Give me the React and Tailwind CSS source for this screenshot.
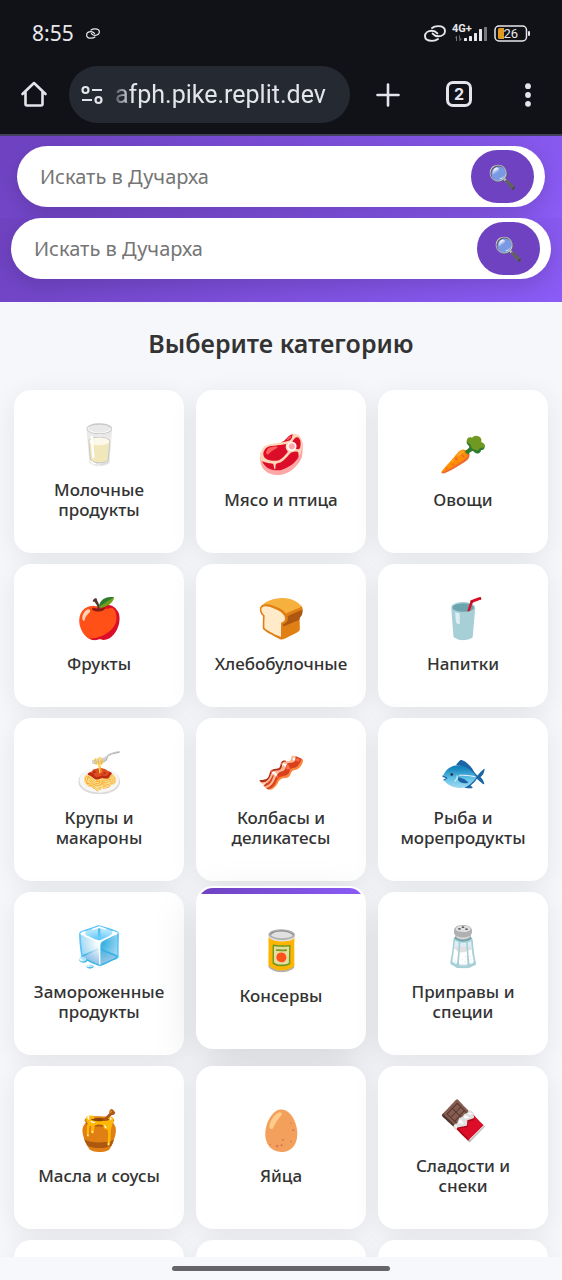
import React from "react";

const categories = [
  ["🥛", "Молочные продукты"],
  ["🥩", "Мясо и птица"],
  ["🥕", "Овощи"],
  ["🍎", "Фрукты"],
  ["🍞", "Хлебобулочные"],
  ["🥤", "Напитки"],
  ["🍝", "Крупы и макароны"],
  ["🥓", "Колбасы и деликатесы"],
  ["🐟", "Рыба и морепродукты"],
  ["🧊", "Замороженные продукты"],
  ["🥫", "Консервы"],
  ["🧂", "Приправы и специи"],
  ["🍯", "Масла и соусы"],
  ["🥚", "Яйца"],
  ["🍫", "Сладости и снеки"],
  ["", ""],
  ["", ""],
  ["", ""],
];

function ChainIcon({ className }) {
  return (
    <svg className={className} viewBox="0 0 22 17" fill="none" stroke="currentColor" strokeWidth="1.900" strokeLinecap="round">
      <path d="M8 3C9.500 1.700 11.500 1.100 14 1.100C18.300 1.100 21 3 21 5.900C21 9.200 18 11.300 14.200 11.300C11.500 11.300 10 10.200 8.600 8.600" />
      <path d="M14 14C12.500 15.300 10.500 15.900 8 15.900C3.700 15.900 1 14 1 11.100C1 7.800 4 5.700 7.800 5.700C10.500 5.700 12 6.800 13.400 8.400" />
    </svg>
  );
}

function StatusBar() {
  return (
    <div className="flex h-[66px] items-center justify-between px-8 text-[#e8e8ec]">
      <div className="flex items-center gap-3">
        <span className="text-[21px] leading-6">8:55</span>
        <ChainIcon className="h-[11px] w-[14px]" />
      </div>
      <div className="flex items-center gap-[6px]">
        <ChainIcon className="h-[17px] w-[22px]" />
        <svg className="h-[22px] w-[36px] overflow-visible" viewBox="0 -2 36 22" role="img" aria-label="4G+">
          <text x="0" y="8" fill="currentColor" fontSize="11" fontWeight="700" fontFamily="Roboto, sans-serif">4G+</text>
          <g fill="#77777d">
            <path d="M3 14L5 11.500V17H4V14ZM7 11.500H8V14.500H10L7.500 17.500Z" />
            <rect x="32" y="3" width="3" height="14" rx="0.500" />
          </g>
          <g fill="currentColor">
            <rect x="12" y="14" width="3" height="3" rx="0.500" />
            <rect x="17" y="12" width="3" height="5" rx="0.500" />
            <rect x="22" y="9" width="3" height="8" rx="0.500" />
            <rect x="27" y="5" width="3" height="12" rx="0.500" />
          </g>
        </svg>
        <svg className="h-[17px] w-[36px]" viewBox="0 0 36 17" role="img" aria-label="26">
          <rect x="1" y="1" width="31.500" height="15" rx="4" fill="none" stroke="currentColor" strokeWidth="1.500" />
          <path d="M5.500 3H10V14H5.500Q4 14 4 12.500V4.500Q4 3 5.500 3Z" fill="#e09a20" />
          <rect x="34" y="6" width="2" height="5" rx="1" fill="currentColor" />
          <text x="9.500" y="13" fill="currentColor" fontSize="13" fontFamily="Roboto, sans-serif">26</text>
        </svg>
      </div>
    </div>
  );
}

function Toolbar() {
  return (
    <div className="flex h-[68px] items-start justify-between pl-5 pr-[22px] text-[#e4e4ec]">
      <button aria-label="Home" className="mt-[14px]">
        <svg className="h-7 w-7" viewBox="0 0 28 28" fill="none" stroke="currentColor" strokeWidth="2.600" strokeLinejoin="round" strokeLinecap="round">
          <path d="M2.500 14L14 3L25.500 14M5.500 12V24Q5.500 25.500 7 25.500H21Q22.500 25.500 22.500 24V12" />
        </svg>
      </button>
      <div className="mr-[26px] ml-[21px] flex h-[57px] min-w-0 flex-1 items-center gap-3 rounded-full bg-[#252932] px-3">
        <svg className="h-5 w-[22px] shrink-0" viewBox="0 0 22 20" fill="none" stroke="currentColor" strokeWidth="2.200">
          <circle cx="4.500" cy="5" r="3" />
          <path d="M11 5H21M1 15H11" />
          <circle cx="17.500" cy="15" r="3" />
        </svg>
        <input
          aria-label="Address"
          defaultValue="afph.pike.replit.dev"
          className="min-w-0 flex-1 bg-transparent font-[Roboto,sans-serif] text-[25px] leading-8 outline-none [mask-image:linear-gradient(to_right,#0004,#000_16px)]"
        />
      </div>
      <div className="flex items-center">
        <button aria-label="New tab" className="mt-4">
          <svg className="h-6 w-6" viewBox="0 0 24 24" fill="none" stroke="currentColor" strokeWidth="2.600" strokeLinecap="round">
            <path d="M12 1.500V22.500M1.500 12H22.500" />
          </svg>
        </button>
        <button aria-label="Tabs" className="ml-[46px] mt-[15px] flex h-[26px] w-[26px] items-center justify-center rounded-[7px] border-[3px] border-current font-[Inter,sans-serif] text-[16px] leading-4 font-bold">2</button>
        <button aria-label="Menu" className="ml-[44px] mt-4">
          <svg className="h-6 w-6" viewBox="0 0 24 24" fill="currentColor">
            <circle cx="12" cy="3.200" r="2.900" />
            <circle cx="12" cy="12" r="2.900" />
            <circle cx="12" cy="20.800" r="2.900" />
          </svg>
        </button>
      </div>
    </div>
  );
}

function SearchBox() {
  return (
    <form className="flex h-[61px] items-center rounded-full bg-white pr-[11px] pl-[23px] shadow-[0_6px_22px_rgba(0,0,0,0.15)]">
      <input
        type="text"
        aria-label="Поиск"
        placeholder="Искать в Дучарха"
        className="min-w-0 flex-1 bg-transparent text-[20px] leading-7 outline-none placeholder:text-[#757575]"
      />
      <button type="button" aria-label="Найти" className="flex h-[53px] w-[63px] items-center justify-center rounded-full bg-[#6f42c1] text-[23px]">
        🔍
      </button>
    </form>
  );
}

function Card({ icon, label, active }) {
  return (
    <a
      href="#"
      className={
        "relative flex flex-col items-center justify-center overflow-hidden rounded-[17px] border-2 border-transparent bg-white px-3 py-[31px] text-center " +
        (active ? "-translate-y-[6px] shadow-[0_17px_46px_rgba(0,0,0,0.13)]" : "shadow-[0_6px_28px_rgba(0,0,0,0.08)]")
      }
    >
      {active && <span className="absolute inset-x-0 top-0 h-[6px] bg-linear-to-r from-[#6f42c1] to-[#8b5cf6]" />}
      <span className="mb-[19px] flex h-[38px] items-center text-[39px] leading-none">{icon}</span>
      <span className="text-[17px] leading-5 font-medium text-[#333]">{label}</span>
    </a>
  );
}

export default function App() {
  return (
    <div className="flex h-screen flex-col overflow-hidden bg-[#f6f7fb] font-['Noto_Sans',sans-serif] text-[#333]">
      <header className="shrink-0 border-b-2 border-[#443f5c] bg-[#111217]">
        <StatusBar />
        <Toolbar />
      </header>
      <main className="min-h-0 flex-1 overflow-hidden">
        <div className="bg-linear-135 from-[#6f42c1] to-[#8b5cf6] px-[17px] pt-[10px] pb-[11px]">
          <SearchBox />
        </div>
        <div className="bg-linear-135 from-[#6f42c1] to-[#8b5cf6] px-[11px] pb-[23px]">
          <SearchBox />
        </div>
        <h1 className="mt-[23px] mb-[29px] text-center text-[25px] leading-9 font-semibold">Выберите категорию</h1>
        <div className="grid grid-cols-3 gap-x-3 gap-y-[11px] px-[14px]">
          {categories.map(([icon, label], i) => (
            <Card key={i} icon={icon} label={label} active={i === 10} />
          ))}
        </div>
      </main>
      <footer className="flex h-[23px] shrink-0 items-center justify-center bg-[#f7f8fc]">
        <div className="h-[5px] w-[218px] rounded-full bg-[#666668]" />
      </footer>
    </div>
  );
}
